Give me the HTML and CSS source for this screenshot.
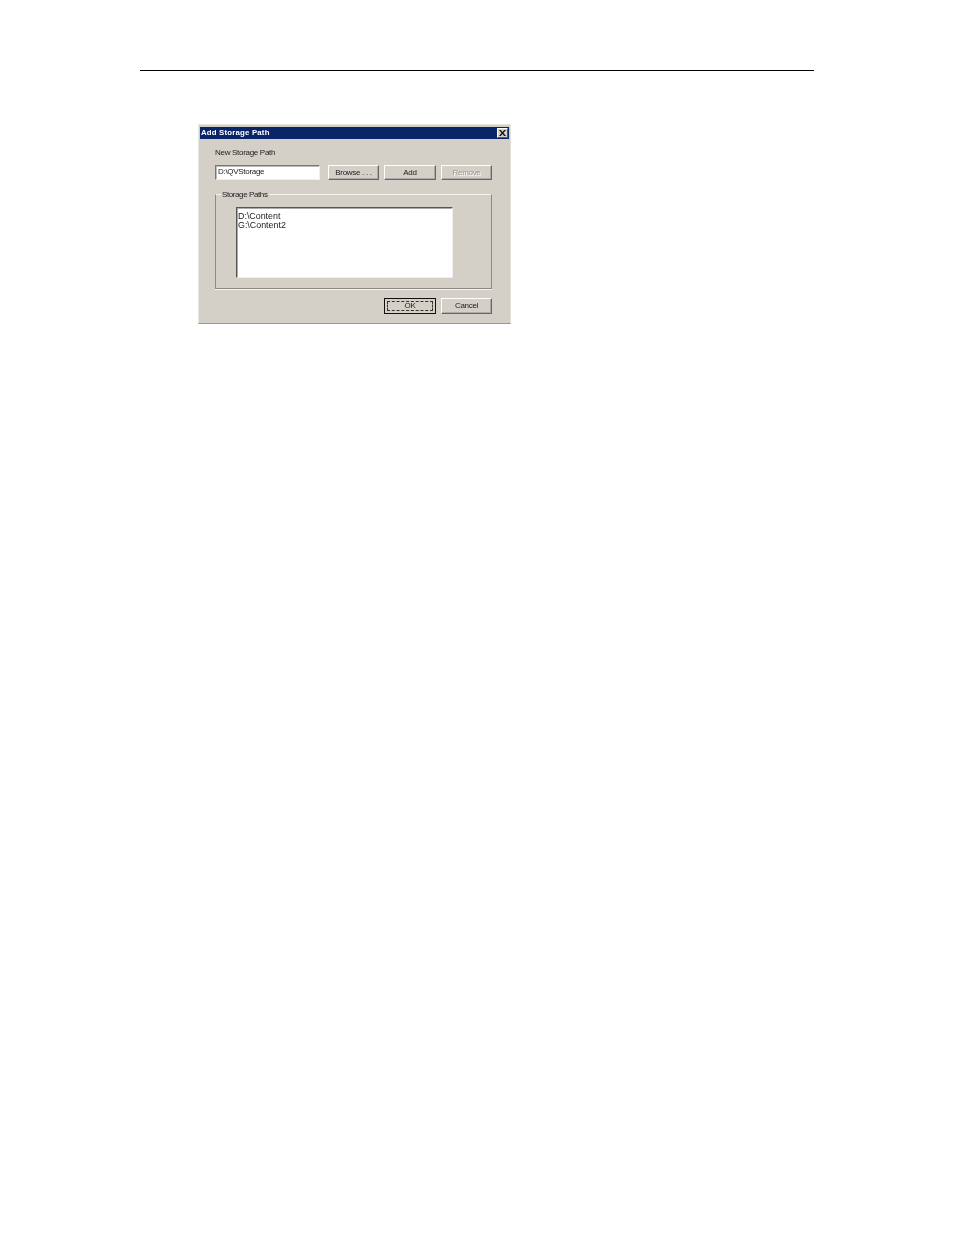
FILE: index.html
```html
<!DOCTYPE html>
<html lang="en">
<head>
    <meta charset="UTF-8">
    <title>Add Storage Path</title>
    <link rel="stylesheet" href="styles.css">
</head>
<body>
    <hr class="rule">
    <div class="dialog">
        <div class="titlebar">
            <span class="title">Add Storage Path</span>
            <div class="close">
                <svg width="7" height="6" viewBox="0 0 7 6"><path d="M0 0h1.8L3.5 2 5.2 0H7L4.4 3 7 6H5.2L3.5 4 1.8 6H0L2.6 3z" fill="#111"/></svg>
            </div>
        </div>
        <div class="content">
            <label class="path-label">New Storage Path</label>
            <div class="path-row">
                <div class="textbox">D:\QVStorage</div>
                <button class="btn browse">Browse . . .</button>
                <button class="btn add">Add</button>
                <button class="btn remove" disabled>Remove</button>
            </div>
            <fieldset class="group">
                <legend>Storage Paths</legend>
                <ul class="listbox">
                    <li>D:\Content</li>
                    <li>G:\Content2</li>
                </ul>
            </fieldset>
            <div class="actions">
                <button class="btn ok"><span class="focus">OK</span></button>
                <button class="btn cancel">Cancel</button>
            </div>
        </div>
    </div>
</body>
</html>
```
FILE: styles.css
```css
*{
    margin: 0;
    padding: 0;
    box-sizing: border-box;
}
body{
    background-color: #fff;
    font-family: "Liberation Sans", Arial, sans-serif;
    font-size: 8px;
    letter-spacing: -0.3px;
    color: #222;
}
.rule{
    width: 674px;
    height: 1px;
    margin: 70px 0 0 140px;
    border: 0;
    background-color: #000;
}
.dialog{
    width: 313px;
    height: 200px;
    margin: 53px 0 0 198px;
    padding: 2px 1px 1px 1px;
    background-color: #d4d0c8;
    border-top: 1px solid #e8e6e2;
    border-left: 1px solid #e8e6e2;
    border-right: 1px solid #e4e2de;
    border-bottom: 1px solid #9a9894;
    filter: blur(0.25px);
}
.titlebar{
    display: flex;
    justify-content: space-between;
    height: 12px;
    padding: 0 1px;
    background-color: #0a246a;
    color: #fff;
}
.title{
    font-weight: bold;
    font-size: 7.8px;
    line-height: 12px;
    letter-spacing: 0.2px;
}
.close{
    display: flex;
    justify-content: center;
    align-items: center;
    width: 11px;
    height: 10px;
    margin-top: 1px;
    background-color: #d4d0c8;
    border: 1px solid;
    border-color: #fff #555 #555 #fff;
}
.content{
    padding: 9px 17px 0 15px;
}
.path-label{
    display: block;
    height: 17px;
    line-height: 10px;
}
.path-row{
    display: flex;
    height: 15px;
}
.textbox{
    flex: none;
    width: 105px;
    padding-left: 2px;
    line-height: 11px;
    background-color: #fff;
    border: 1px solid;
    border-color: #777 #eee #eee #777;
    box-shadow: inset 1px 1px 0 #bbb;
}
.btn{
    flex: none;
    height: 15px;
    background-color: #d4d0c8;
    font: inherit;
    letter-spacing: inherit;
    color: inherit;
    border: 1px solid;
    border-color: #fff #666 #666 #fff;
    box-shadow: inset -1px -1px 0 #aaa;
}
.browse{
    width: 51px;
    margin-left: 8px;
}
.add{
    width: 52px;
    margin-left: 5px;
}
.remove{
    width: 51px;
    margin-left: 5px;
    color: #9b9892;
    text-shadow: 1px 1px 0 #fff;
}
.group{
    width: 277px;
    height: 99px;
    margin-top: 10px;
    padding: 0;
    border: 1px solid;
    border-color: #f4f3f0 #8d8a85 #8d8a85 #8d8a85;
    box-shadow: 0 1px 0 #f4f3f0;
}
.group legend{
    margin-left: 5px;
    padding: 0 1px;
    line-height: 9px;
    letter-spacing: -0.4px;
}
.listbox{
    width: 217px;
    height: 71px;
    margin: 8px 0 0 20px;
    padding: 4px 0 0 1px;
    font-size: 8.9px;
    letter-spacing: 0;
    list-style: none;
    background-color: #fff;
    border: 1px solid;
    border-color: #555 #eee #eee #555;
    box-shadow: inset 1px 1px 0 #aaa;
}
.listbox li{
    height: 8.5px;
    line-height: 8.5px;
}
.actions{
    display: flex;
    justify-content: flex-end;
    gap: 5px;
    margin-top: 9px;
}
.ok{
    width: 52px;
    height: 16px;
    padding: 2px;
    border-color: #111;
    box-shadow: none;
}
.focus{
    display: block;
    height: 100%;
    line-height: 8px;
    border: 1px dashed #333;
}
.cancel{
    width: 51px;
    height: 16px;
    padding-bottom: 2px;
}
```
